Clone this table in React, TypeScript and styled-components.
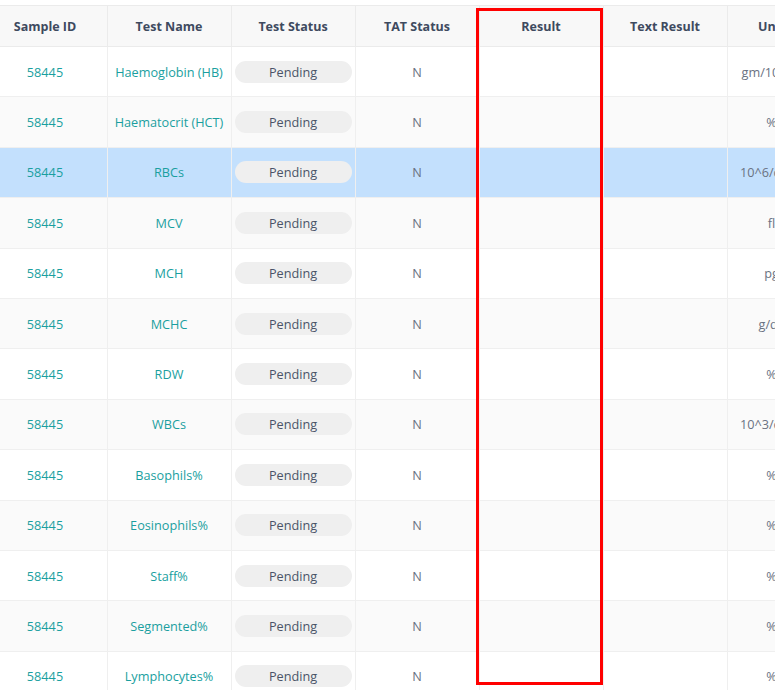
import React from "react";
import styled, { createGlobalStyle } from "styled-components";

const GlobalStyle = createGlobalStyle`
  html, body { margin: 0; padding: 0; background: #ffffff; }
  body { font-family: "Open Sans", "Noto Sans", Arial, sans-serif; }
`;

const Viewport = styled.div`
  position: relative;
  width: 775px;
  height: 690px;
  overflow: hidden;
  padding-top: 5px;
  box-sizing: border-box;
  background: #ffffff;
`;

const Table = styled.table`
  border-collapse: collapse;
  table-layout: fixed;
  margin-left: -17.5px;
  width: ${124 * 6 + 89 + 124 * 2}px;
`;

const HeadCell = styled.th<{ $w: number }>`
  width: ${(p) => p.$w}px;
  height: 41px;
  padding: 0 4px;
  box-sizing: border-box;
  background: #f8f8f8;
  border: 1px solid #ebebeb;
  color: #3e4a5f;
  font-size: 12.5px;
  font-weight: 700;
  text-align: center;
  white-space: nowrap;
  overflow: hidden;
`;

const Row = styled.tr<{ $selected?: boolean; $alt?: boolean }>`
  height: 50.4px;
  background: ${(p) => (p.$selected ? "#c3e0fd" : p.$alt ? "#fafafa" : "#ffffff")};
`;

const Cell = styled.td<{ $tone?: "link" | "muted" }>`
  padding: 0 3px;
  box-sizing: border-box;
  border: 1px solid #efefef;
  font-size: 12.7px;
  text-align: center;
  white-space: nowrap;
  overflow: hidden;
  color: ${(p) => (p.$tone === "link" ? "#1a9fa0" : "#6a7282")};
`;

const Pill = styled.span`
  display: flex;
  align-items: center;
  justify-content: center;
  height: 22px;
  border-radius: 11px;
  background: #efefef;
  color: #4a5468;
  font-size: 12.7px;
`;

const Highlight = styled.div`
  position: absolute;
  left: 475.7px;
  top: 8.3px;
  width: 127.6px;
  height: 677px;
  box-sizing: border-box;
  border: 3px solid #ff0000;
  pointer-events: none;
`;

const columns: { label: string; w: number }[] = [
  { label: "Sample ID", w: 124 },
  { label: "Test Name", w: 124 },
  { label: "Test Status", w: 124 },
  { label: "TAT Status", w: 124 },
  { label: "Result", w: 124 },
  { label: "Text Result", w: 124 },
  { label: "Unit", w: 89 },
  { label: "Normal Range", w: 124 },
  { label: "Flag", w: 124 },
];

const rows: { name: string; unit: string; range: string }[] = [
  { name: "Haemoglobin (HB)", unit: "gm/100ml", range: "13 - 17" },
  { name: "Haematocrit (HCT)", unit: "%", range: "40 - 50" },
  { name: "RBCs", unit: "10^6/cmm", range: "4.5 - 5.5" },
  { name: "MCV", unit: "fl", range: "83 - 101" },
  { name: "MCH", unit: "pg", range: "27 - 32" },
  { name: "MCHC", unit: "g/dL", range: "31.5 - 34.5" },
  { name: "RDW", unit: "%", range: "11.6 - 14" },
  { name: "WBCs", unit: "10^3/cmm", range: "4 - 10" },
  { name: "Basophils%", unit: "%", range: "0 - 1" },
  { name: "Eosinophils%", unit: "%", range: "1 - 6" },
  { name: "Staff%", unit: "%", range: "0 - 5" },
  { name: "Segmented%", unit: "%", range: "40 - 80" },
  { name: "Lymphocytes%", unit: "%", range: "20 - 40" },
];

export default function App() {
  return (
    <>
      <GlobalStyle />
      <Viewport>
        <Table>
          <thead>
            <tr>
              {columns.map((c) => (
                <HeadCell key={c.label} $w={c.w}>
                  {c.label}
                </HeadCell>
              ))}
            </tr>
          </thead>
          <tbody>
            {rows.map((r, i) => (
              <Row key={r.name} $selected={i === 2} $alt={i % 2 === 1}>
                <Cell $tone="link">58445</Cell>
                <Cell $tone="link">{r.name}</Cell>
                <Cell>
                  <Pill>Pending</Pill>
                </Cell>
                <Cell $tone="muted">N</Cell>
                <Cell />
                <Cell />
                <Cell $tone="muted">{r.unit}</Cell>
                <Cell $tone="muted">{r.range}</Cell>
                <Cell />
              </Row>
            ))}
          </tbody>
        </Table>
        <Highlight />
      </Viewport>
    </>
  );
}
